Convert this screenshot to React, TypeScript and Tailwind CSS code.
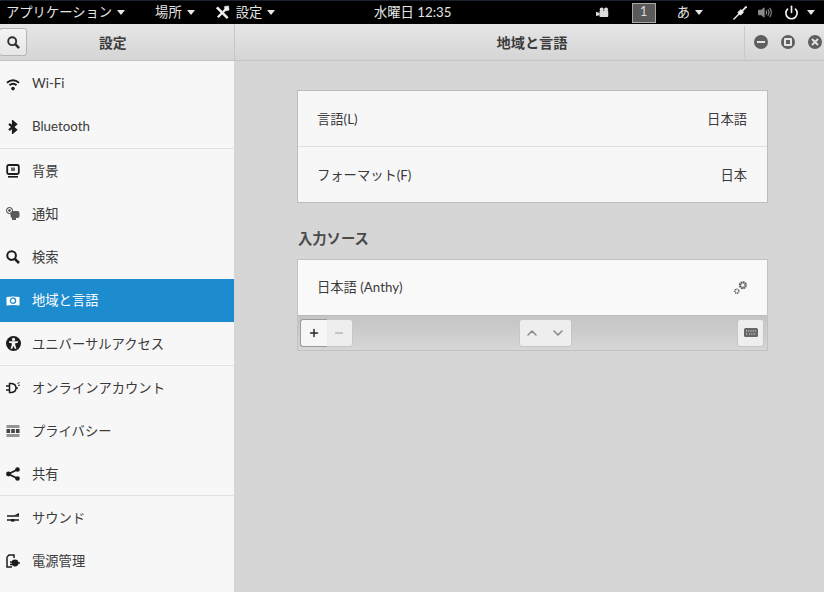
import type { ReactNode } from "react";
import { Plus, Minus, ChevronUp, ChevronDown, Power } from "lucide-react";

function Caret() {
  return <span className="inline-block w-0 h-0 border-x-[4px] border-x-transparent border-t-[5px] border-t-[#e8e8e8]" />;
}

function Wrench() {
  return (
    <svg viewBox="0 0 16 16" className="w-[15px] h-[15px]" fill="none" stroke="#eeeeee">
      <path d="M2 2.5 L13.5 14" strokeWidth="2.8" />
      <path d="M13.5 2.5 L3 13" strokeWidth="2.4" />
      <path d="M10 1.5 L14.5 1 L15 5.5 L12 6 L10.5 4.5 Z" fill="#eeeeee" strokeWidth="0.5" />
    </svg>
  );
}

function SearchIcon({ className }: { className: string }) {
  return (
    <svg viewBox="0 0 14 14" className={className} fill="none" stroke="currentColor">
      <circle cx="5.6" cy="5.6" r="4.3" strokeWidth="2" />
      <path d="M8.8 8.8 L13 13" strokeWidth="2.6" />
    </svg>
  );
}

function WinBtn({ children }: { children: ReactNode }) {
  return (
    <div className="w-[14px] h-[14px] rounded-full bg-[#5f5f5f] flex items-center justify-center">{children}</div>
  );
}

const ico = "w-[14px] h-[14px] text-[#1c1c1c]";

function Row({ icon, label, active, latin }: { icon: ReactNode; label: string; active?: boolean; latin?: boolean }) {
  return (
    <div
      className={
        "h-[43.2px] flex items-center pl-[6px] gap-[12px] text-[13.3px] " +
        (active ? "bg-[#1d8ccf] text-white" : "text-[#3a3a3a]")
      }
    >
      <span className="w-[14px] h-[14px] flex items-center justify-center shrink-0">{icon}</span>
      <span className={latin || active ? "" : "pt-[2px]"}>{label}</span>
    </div>
  );
}

const Divider = () => <div className="h-px bg-[#e2e2e2]" />;

export default function App() {
  return (
    <div
      className="w-[824px] h-[592px] overflow-hidden flex flex-col bg-[#d6d6d6]"
      style={{ fontFamily: 'Lato, "Noto Sans CJK JP", sans-serif' }}
    >
      {/* top bar */}
      <div className="h-[24px] shrink-0 bg-black border-t border-[#1a2230] flex items-center text-[13.3px] text-[#e4e4e4] relative">
        <div className="flex items-center gap-[5px] ml-[6px]">
          <span>アプリケーション</span>
          <Caret />
        </div>
        <div className="flex items-center gap-[5px] ml-[30px]">
          <span>場所</span>
          <Caret />
        </div>
        <div className="flex items-center ml-[20px]">
          <Wrench />
          <span className="ml-[6px] mr-[5px]">設定</span>
          <Caret />
        </div>
        <span className="absolute left-[374px] top-[2px]">水曜日 12:35</span>
        <div className="ml-auto flex items-center mr-[9px]">
          <svg viewBox="0 0 16 12" className="w-[14px] h-[11px] mr-[22px]" fill="#dddddd">
            <rect x="4" y="4" width="10" height="7" rx="1" />
            <circle cx="6.5" cy="2.5" r="2.3" />
            <circle cx="11.5" cy="2.5" r="2.3" />
            <path d="M0 5 L4 6.5 V9 L0 10 Z" />
          </svg>
          <div className="w-[24px] h-[20px] bg-[#5a5a5a] border border-[#a8a8a8] flex items-center justify-center text-[12.5px] text-[#dddddd] mr-[21px]">
            1
          </div>
          <span className="mr-[5px]">あ</span>
          <Caret />
          <svg viewBox="0 0 16 16" className="w-[14px] h-[14px] ml-[30px] mr-[11px]" fill="none" stroke="#f2f2f2">
            <path d="M0.5 15.5 L8 8" strokeWidth="1.5" />
            <path d="M5.5 7.5 L8.5 10.5 L12 7 L9 4 Z" fill="#f2f2f2" />
            <path d="M10.5 5.5 L15.5 0.5" strokeWidth="2" />
          </svg>
          <svg viewBox="0 0 16 14" className="w-[15px] h-[13px] mr-[11px]" fill="none" stroke="#8c8c8c">
            <path d="M0.5 4.5 H3.5 L6.5 2 V12 L3.5 9.5 H0.5 Z" fill="#8c8c8c" />
            <path d="M8.5 5 Q10 7 8.5 9 M10.5 3.5 Q13 7 10.5 10.5 M12.5 2 Q16 7 12.5 12" strokeWidth="1.2" />
          </svg>
          <Power className="w-[15px] h-[15px] text-[#f4f4f4] mr-[8px]" strokeWidth={2.6} />
          <Caret />
        </div>
      </div>

      {/* header */}
      <div className="h-[37px] shrink-0 flex bg-gradient-to-b from-[#e6e6e6] to-[#d5d5d5] border-b border-[#c4c4c4]">
        <div className="w-[235px] shrink-0 flex items-center border-r border-[#c6c6c6]">
          <div className="w-[28px] h-[28px] -ml-px rounded-[3px] border border-[#b5b5b5] bg-gradient-to-b from-[#f4f4f4] to-[#e6e6e6] flex items-center justify-center">
            <SearchIcon className="w-[13px] h-[13px] text-[#2e2e2e]" />
          </div>
          <span className="ml-[72px] pt-[2px] font-bold text-[13.8px] text-[#3c3c3c]">設定</span>
        </div>
        <div className="flex-1 flex items-center">
          <span className="flex-1 text-center pt-[2px] font-bold text-[14.2px] text-[#3c3c3c] pl-[85px]">地域と言語</span>
          <div className="w-[80px] h-[32px] border-l border-[#c9c9c9] flex items-center gap-[13px] pl-[9px]">
            <WinBtn>
              <span className="w-[8px] h-[2px] bg-[#e4e4e4]" />
            </WinBtn>
            <WinBtn>
              <span className="w-[8px] h-[8px] border-[2px] border-[#e4e4e4] rounded-[1px]" />
            </WinBtn>
            <WinBtn>
              <svg viewBox="0 0 8 8" className="w-[8px] h-[8px]" stroke="#e4e4e4" strokeWidth="1.8">
                <path d="M1 1 L7 7 M7 1 L1 7" />
              </svg>
            </WinBtn>
          </div>
        </div>
      </div>

      <div className="flex-1 flex min-h-0">
        {/* sidebar */}
        <div className="w-[234px] shrink-0 bg-[#f7f7f7] pt-px">
          <Row
            latin
            icon={
              <svg viewBox="0 0 14 14" className={ico}>
                <path d="M0.3 5 Q7 -0.5 13.7 5 L12.4 6.4 Q7 2 1.6 6.4 Z" fill="currentColor" />
                <path d="M2.8 7.6 Q7 4 11.2 7.6 L9.9 9 Q7 6.6 4.1 9 Z" fill="currentColor" />
                <circle cx="7" cy="11.6" r="1.8" fill="currentColor" />
              </svg>
            }
            label="Wi-Fi"
          />
          <Row
            latin
            icon={
              <svg viewBox="0 0 14 14" className={ico} fill="none" stroke="currentColor" strokeWidth="2.2">
                <path d="M3 3.8 L10 9.8 L7 12.4 V1.6 L10 4.2 L3 10.2" />
              </svg>
            }
            label="Bluetooth"
          />
          <Divider />
          <Row
            icon={
              <svg viewBox="0 0 14 14" className={ico}>
                <rect x="1.2" y="1" width="11.6" height="9" rx="1.5" fill="none" stroke="currentColor" strokeWidth="1.8" />
                <rect x="5" y="3.5" width="4" height="3.5" fill="#666666" />
                <rect x="2" y="12" width="10" height="1.6" fill="currentColor" />
              </svg>
            }
            label="背景"
          />
          <Row
            icon={
              <svg viewBox="0 0 14 14" className={ico}>
                <rect x="4.5" y="4" width="9" height="7" rx="2" fill="#5a5a5a" />
                <rect x="6" y="9" width="4" height="4" fill="#5a5a5a" />
                <circle cx="3.5" cy="3.5" r="3" fill="#f7f7f7" stroke="#333333" strokeWidth="1" />
                <circle cx="3.5" cy="3.5" r="1.2" fill="#333333" />
              </svg>
            }
            label="通知"
          />
          <Row icon={<SearchIcon className={ico} />} label="検索" />
          <Row
            active
            icon={
              <svg viewBox="0 0 14 14" className="w-[14px] h-[14px]">
                <path d="M0.5 3 Q7 1.8 13.5 3 V11.5 Q7 10.3 0.5 11.5 Z" fill="#ffffff" />
                <circle cx="7" cy="6.8" r="2.6" fill="none" stroke="#1d8ccf" strokeWidth="1.3" />
              </svg>
            }
            label="地域と言語"
          />
          <Row
            icon={
              <svg viewBox="0 0 14 14" className="w-[15px] h-[15px] shrink-0">
                <circle cx="7" cy="7" r="7" fill="#1c1c1c" />
                <circle cx="7" cy="3.2" r="1.5" fill="#f7f7f7" />
                <path d="M2.8 4.8 H11.2 V6.2 L8.6 6.8 V8.4 L9.8 12 H8.2 L7 9.2 L5.8 12 H4.2 L5.4 8.4 V6.8 L2.8 6.2 Z" fill="#f7f7f7" />
              </svg>
            }
            label="ユニバーサルアクセス"
          />
          <Divider />
          <Row
            icon={
              <svg viewBox="0 0 14 14" className={ico} fill="none" stroke="currentColor">
                <path d="M3.5 2.5 H5.5 Q10 3 10 7 Q10 11 5.5 11.5 H3.5 Z" fill="none" strokeWidth="1.5" />
                <path d="M0 5 H3.5 M0 9 H3.5 M10 7 H12" strokeWidth="1.3" />
                <path d="M11.5 2.5 L13.5 1.5 M12 4.5 L14 4" strokeWidth="1" />
              </svg>
            }
            label="オンラインアカウント"
          />
          <Row
            icon={
              <svg viewBox="0 0 14 14" className={ico} fill="#444444">
                <rect x="0.5" y="1" width="13" height="3" opacity="0.55" />
                <rect x="0.5" y="5" width="3.6" height="4" />
                <rect x="5.2" y="5" width="3.6" height="4" />
                <rect x="9.9" y="5" width="3.6" height="4" />
                <rect x="0.5" y="10" width="13" height="3" opacity="0.55" />
              </svg>
            }
            label="プライバシー"
          />
          <Row
            icon={
              <svg viewBox="0 0 14 14" className={ico} fill="currentColor" stroke="currentColor">
                <path d="M11.5 2.5 L2.5 7 L11.5 11.5" fill="none" strokeWidth="1.8" />
                <circle cx="11.5" cy="2.5" r="2.3" stroke="none" />
                <circle cx="2.5" cy="7" r="2.4" stroke="none" />
                <circle cx="11.5" cy="11.5" r="2.3" stroke="none" />
              </svg>
            }
            label="共有"
          />
          <div className="h-px -mt-px bg-[#e2e2e2]" />
          <Row
            icon={
              <svg viewBox="0 0 14 14" className={ico} fill="none" stroke="currentColor" strokeWidth="1.3">
                <path d="M1 6 H13 M1 10 H13" />
                <path d="M8 5.5 L13 3 V5.5 Z" fill="currentColor" stroke="none" />
                <rect x="5" y="9" width="3.5" height="2.6" fill="currentColor" stroke="none" />
              </svg>
            }
            label="サウンド"
          />
          <Row
            icon={
              <svg viewBox="0 0 14 14" className={ico}>
                <path d="M1 3 L3 1 H8 V4 M1 3 V13 H6" fill="none" stroke="currentColor" strokeWidth="1.5" />
                <circle cx="9" cy="9" r="3.4" fill="currentColor" />
                <path d="M4 8 H6 M4 10.5 H6 M12 9 H14.5" stroke="currentColor" strokeWidth="1.3" />
              </svg>
            }
            label="電源管理"
          />
        </div>

        {/* main */}
        <div className="flex-1 pl-[63px] pt-[29px]">
          <div className="w-[471px]">
            <div className="border border-[#bdbdbd] bg-[#f7f7f7] text-[13.3px] text-[#3a3a3a]">
              <div className="h-[55px] flex items-center justify-between pl-[19px] pr-[20px] pt-[2px]">
                <span>言語(L)</span>
                <span>日本語</span>
              </div>
              <div className="h-px bg-[#e0e0e0]" />
              <div className="h-[55px] flex items-center justify-between pl-[19px] pr-[20px] pt-[2px]">
                <span>フォーマット(F)</span>
                <span>日本</span>
              </div>
            </div>

            <div className="mt-[26px] mb-[10px] pl-px font-bold text-[14.3px] text-[#4a4a4a] leading-[20px]">入力ソース</div>

            <div className="border border-[#c2c2c2] text-[13.3px] text-[#3a3a3a]">
              <div className="h-[55px] bg-[#f9f9f9] flex items-center justify-between pl-[19px] pr-[19px]">
                <span>日本語 (Anthy)</span>
                <svg viewBox="0 0 16 16" className="w-[15px] h-[15px]" fill="none" stroke="#5e5e5e">
                  <circle cx="10.5" cy="5.5" r="3" strokeWidth="2.6" strokeDasharray="1.8 0.5" />
                  <circle cx="4" cy="12" r="2.2" strokeWidth="1.6" strokeDasharray="1.2 0.6" />
                </svg>
              </div>
              <div className="h-[35px] border-t border-[#bcbcbc] bg-gradient-to-b from-[#c4c4c4] to-[#d6d6d6] flex items-center justify-between pl-[2px] pr-[2px]">
                <div className="h-[28px] w-[53px] flex rounded-[3px] border border-[#c6c6c6] bg-[#eeeeee]">
                  <div className="w-[27px] -m-px h-[28px] rounded-l-[3px] border border-[#9a9a9a] bg-[#f6f6f6] border-r-0 flex items-center justify-center">
                    <Plus className="w-[12px] h-[12px] text-[#2a2a2a]" strokeWidth={3} />
                  </div>
                  <div className="flex-1 flex items-center justify-center">
                    <Minus className="w-[12px] h-[12px] text-[#999999]" strokeWidth={2.4} />
                  </div>
                </div>
                <div className="h-[28px] w-[53px] flex items-center justify-center gap-[10px] rounded-[3px] border border-[#c6c6c6] bg-[#eeeeee]">
                  <ChevronUp className="w-[16px] h-[16px] text-[#8a8a8a]" strokeWidth={2.4} />
                  <ChevronDown className="w-[16px] h-[16px] text-[#8a8a8a]" strokeWidth={2.4} />
                </div>
                <div className="h-[28px] w-[27px] mr-px flex items-center justify-center rounded-[3px] border border-[#c6c6c6] bg-[#eeeeee]">
                  <svg viewBox="0 0 14 10" className="w-[14px] h-[10px]">
                    <rect width="14" height="9" rx="1.5" fill="#666666" />
                    <path d="M2 3 H12 M2 6 H4 M5 6 H12" stroke="#dddddd" strokeWidth="1" strokeDasharray="1 0.8" />
                  </svg>
                </div>
              </div>
            </div>
          </div>
        </div>
      </div>
    </div>
  );
}
